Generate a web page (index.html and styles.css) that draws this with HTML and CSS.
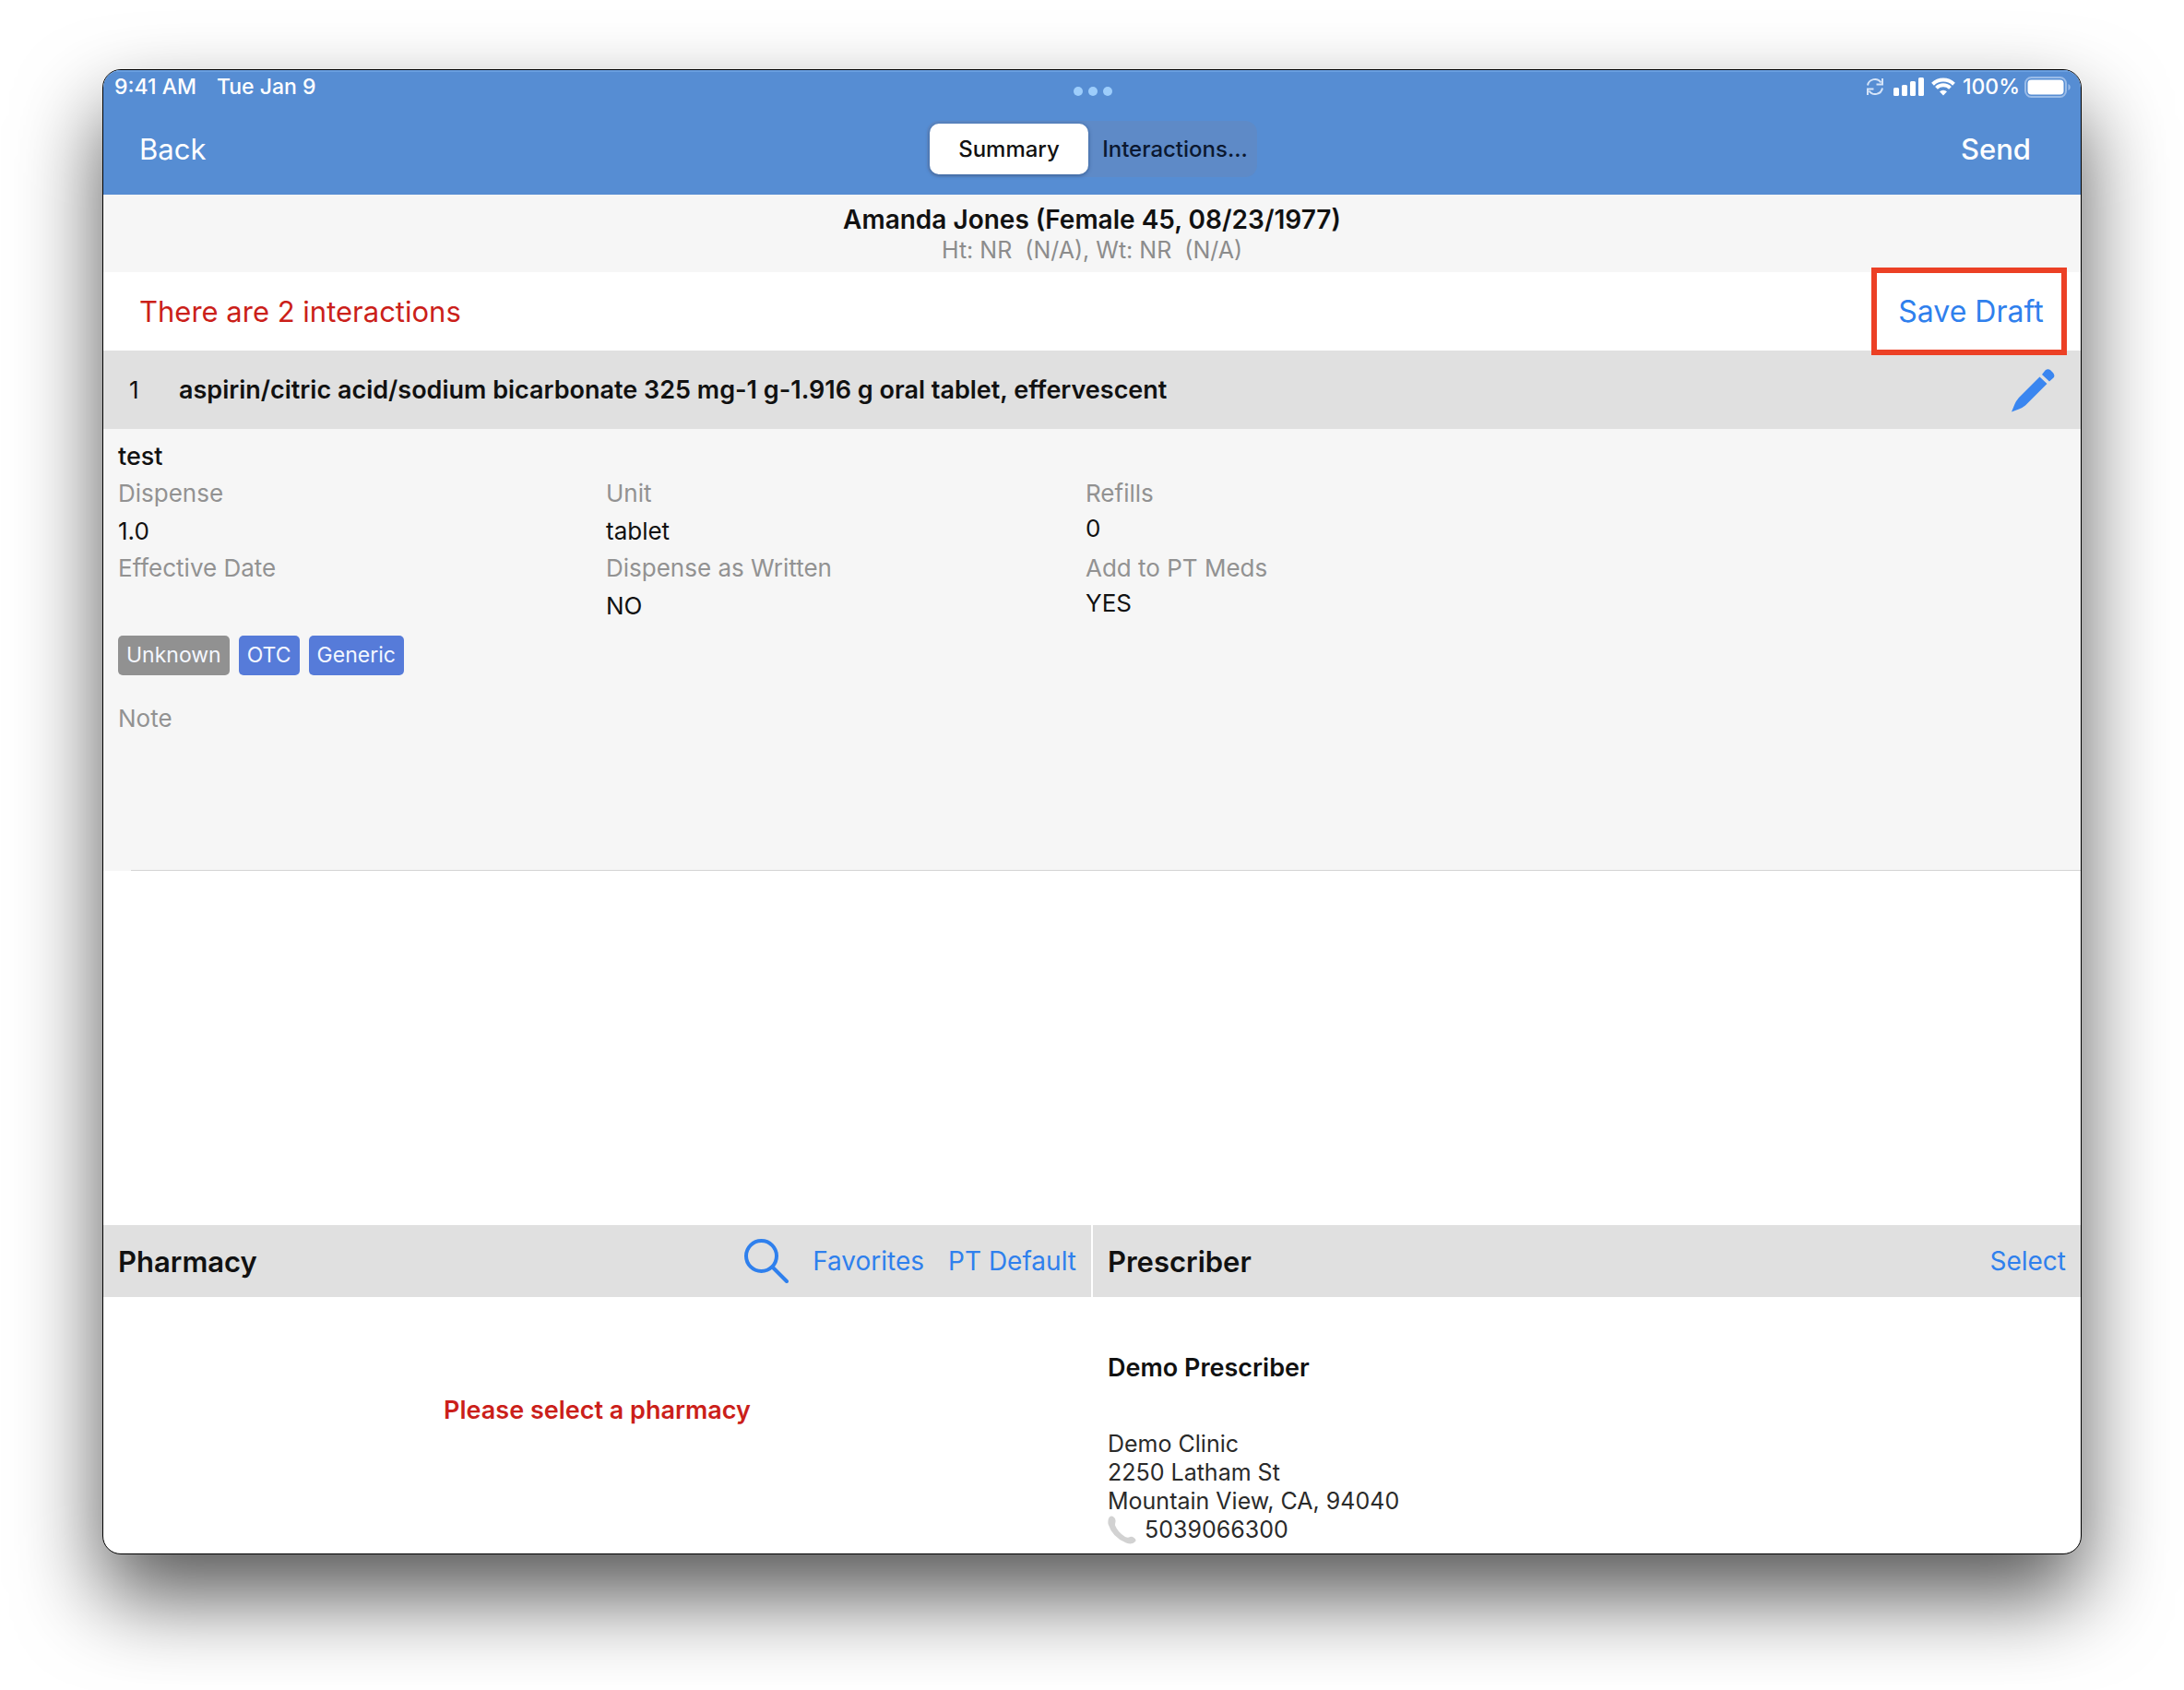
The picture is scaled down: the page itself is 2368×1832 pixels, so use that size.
FILE: index.html
```html
<!DOCTYPE html>
<html lang="en">
<head>
<meta charset="utf-8">
<title>Prescription Summary</title>
<link rel="stylesheet" href="styles.css">
</head>
<body>
<div class="window">
  <header class="topbar">
    <div class="status">
      <div class="status-left"><span>9:41 AM</span><span>Tue Jan 9</span></div>
      <div class="dots" aria-hidden="true"><i></i><i></i><i></i></div>
      <div class="status-right">
        <svg class="ic-sync" viewBox="0 0 20 20" aria-hidden="true"><path d="M2 8.500A8 8 0 0 1 16.500 5.500M18 11.500A8 8 0 0 1 3.500 14.500"/><path d="M18 1v6.500h-6.500M2 19v-6.500h6.500"/></svg>
        <svg class="ic-signal" viewBox="0 0 33 20" aria-hidden="true"><rect x="0" y="11" width="6" height="9" rx="1.500"/><rect x="9" y="8" width="6" height="12" rx="1.500"/><rect x="18" y="4" width="6" height="16" rx="1.500"/><rect x="27" y="0" width="6" height="20" rx="1.500"/></svg>
        <svg class="ic-wifi" viewBox="0 0 26 20" aria-hidden="true"><path d="M1.500 7.200A16.500 16.500 0 0 1 24.500 7.200M5.500 11.400a10.800 10.800 0 0 1 15 0"/><path class="fill" d="M13 19.500l-4-4.200a5.800 5.800 0 0 1 8 0z"/></svg>
        <span>100%</span>
        <svg class="ic-battery" viewBox="0 0 51 23" aria-hidden="true"><rect class="shell" x="1" y="1" width="44" height="21" rx="6.500"/><rect class="charge" x="3.500" y="3.500" width="39" height="16" rx="4"/><path class="tip" d="M47.500 8v7c3-1.500 3-5.500 0-7z"/></svg>
      </div>
    </div>
    <nav class="nav">
      <button class="nav-btn" type="button">Back</button>
      <div class="segmented" role="tablist">
        <button class="segment active" type="button" role="tab" aria-selected="true">Summary</button>
        <button class="segment" type="button" role="tab" aria-selected="false">Interactions...</button>
      </div>
      <button class="nav-btn send" type="button">Send</button>
    </nav>
  </header>

  <section class="patient">
    <h1 class="patient-name">Amanda Jones (Female 45, 08/23/1977)</h1>
    <p class="patient-vitals">Ht: NR&nbsp; (N/A), Wt: NR&nbsp; (N/A)</p>
  </section>

  <section class="alert">
    <p class="alert-text">There are 2 interactions</p>
    <button class="save-draft" type="button">Save Draft</button>
  </section>

  <main class="list">
    <article class="drug">
      <header class="drug-head">
        <span class="drug-index">1</span>
        <h2 class="drug-name">aspirin/citric acid/sodium bicarbonate 325 mg-1 g-1.916 g oral tablet, effervescent</h2>
        <button class="edit" type="button" aria-label="Edit prescription">
          <svg viewBox="0 0 48 48" aria-hidden="true"><path d="M31.500 9.500l8 7.500L16 40.500Q13 43 9 44.500L1 47.500l3.500-8.500Q6 35.500 9 32zM34 7l3.500-4.500q3-2.500 6 0l2.500 2.500q2.500 3 .5 5.500L42 14.500z"/></svg>
        </button>
      </header>
      <div class="drug-body">
        <p class="sig">test</p>
        <div class="fields">
          <dl class="field"><dt>Dispense</dt><dd>1.0</dd><dt>Effective Date</dt><dd></dd></dl>
          <dl class="field"><dt>Unit</dt><dd>tablet</dd><dt>Dispense as Written</dt><dd>NO</dd></dl>
          <dl class="field tight"><dt>Refills</dt><dd>0</dd><dt>Add to PT Meds</dt><dd>YES</dd></dl>
        </div>
        <div class="tags"><span class="tag muted">Unknown</span><span class="tag">OTC</span><span class="tag">Generic</span></div>
        <p class="note">Note</p>
      </div>
    </article>
  </main>

  <footer class="panes">
    <section class="pane">
      <header class="pane-head">
        <h2 class="pane-title">Pharmacy</h2>
        <button class="search" type="button" aria-label="Search pharmacies">
          <svg viewBox="0 0 48 48" aria-hidden="true"><circle cx="18.500" cy="18.500" r="16.500"/><path d="M30.500 30.500L46 46"/></svg>
        </button>
        <button class="link" type="button">Favorites</button>
        <button class="link" type="button">PT Default</button>
      </header>
      <p class="pane-empty">Please select a pharmacy</p>
    </section>
    <section class="pane">
      <header class="pane-head">
        <h2 class="pane-title">Prescriber</h2>
        <button class="link" type="button">Select</button>
      </header>
      <div class="prescriber">
        <h3 class="prescriber-name">Demo Prescriber</h3>
        <address class="address">
          <span>Demo Clinic</span>
          <span>2250 Latham St</span>
          <span>Mountain View, CA, 94040</span>
          <span class="phone"><svg viewBox="0 0 31 31" aria-hidden="true"><path d="M1.500 2Q4-.5 6.500 1.500q2.500 2 2 5Q8 8.500 8 10.500 11 18 19 23q2.500 1 4 .5 3-1.500 5.500.5 3 2 1.500 4-3 4-10 1.500Q5 23.500.5 9 0 4 1.500 2z"/></svg>5039066300</span>
        </address>
      </div>
    </section>
  </footer>
</div>
</body>
</html>
```
FILE: styles.css
```css
* { box-sizing: border-box; margin: 0; padding: 0; }

body {
  display: flex;
  min-height: 100vh;
  padding: 75px 111px 147px;
  background: #fff;
  color: #111;
  font-family: Inter, "Liberation Sans", sans-serif;
  font-size: 26px;
}

button { border: 0; background: none; color: inherit; font: inherit; cursor: pointer; }
h1, h2, h3, address { font-size: inherit; font-style: normal; }
svg { display: block; flex: none; }

.window {
  flex: 1;
  display: flex;
  flex-direction: column;
  overflow: hidden;
  border: 1px solid #000;
  border-radius: 20px;
  background: #fff;
  box-shadow: 0 46px 92px rgba(0, 0, 0, 0.66);
}

/* Status bar and navigation */
.topbar { background: #568dd3; color: #fff; box-shadow: inset 0 2px #6a9fe0; }
.status { display: grid; grid-template-columns: 1fr auto 1fr; align-items: center; height: 36px; padding: 0 10px 0 12px; font-size: 23px; font-weight: 500; }
.status-left { display: flex; gap: 22px; }
.status-right { display: flex; justify-content: flex-end; align-items: center; gap: 8px; }
.dots { display: flex; gap: 6px; padding-top: 10px; }
.dots i { width: 10px; height: 10px; border-radius: 50%; background: #9dcdfb; }
.ic-sync { width: 20px; height: 20px; margin-right: 2px; fill: none; stroke: #d5e4f8; stroke-width: 2; }
.ic-signal { width: 33px; height: 20px; fill: #fff; }
.ic-wifi { width: 26px; height: 20px; fill: none; stroke: #fff; stroke-width: 4; }
.ic-wifi .fill { fill: #fff; stroke: none; }
.ic-battery { width: 51px; height: 23px; margin-left: -3px; }
.ic-battery .shell { fill: none; stroke: #9abce8; stroke-width: 2; }
.ic-battery .charge { fill: #fff; }
.ic-battery .tip { fill: #9abce8; }

.nav { display: grid; grid-template-columns: 1fr auto 1fr; align-items: center; height: 99px; padding: 0 54px 0 39px; }
.nav-btn { justify-self: start; font-size: 31px; }
.send { justify-self: end; font-weight: 500; }
.segmented { display: flex; height: 61px; margin-left: 15px; padding: 3px; border-radius: 13px; background: #5e8ac7; }
.segment { width: 180px; padding-left: 8px; border-radius: 10px; color: #0b1830; font-size: 24px; font-weight: 500; }
.segment.active { width: 172px; padding-left: 0; background: #fff; color: #111; box-shadow: 0 1px 4px rgba(0, 40, 90, 0.5); }

/* Patient banner */
.patient { padding: 11px 16px 8px; background: #f6f6f6; text-align: center; }
.patient-name { font-size: 28px; font-weight: 600; line-height: 33px; }
.patient-vitals { color: #8c8c8c; font-size: 25px; line-height: 32px; }

/* Interaction warning */
.alert { display: flex; align-items: center; justify-content: space-between; height: 85px; padding: 0 15px 0 39px; }
.alert-text { color: #cb1f1a; font-size: 31px; }
.save-draft { position: relative; z-index: 1; flex: none; width: 212px; height: 95px; margin: -5px 0; padding-left: 4px; border: 6px solid #ec4025; color: #2f80ed; font-size: 32px; }

/* Prescription list */
.list { flex: 1; }
.drug-head { display: flex; align-items: center; height: 85px; padding: 0 28px; background: #e0e0e0; }
.drug-index { width: 54px; }
.drug-name { flex: 1; font-size: 27px; font-weight: 600; }
.edit svg { width: 48px; height: 48px; fill: #3a86f0; }
.drug-body { position: relative; min-height: 479px; padding: 10px 16px; background: #f6f6f6; line-height: 40px; }
.drug-body::after { content: ""; position: absolute; right: 0; bottom: 0; left: 30px; height: 1px; background: #d4d4d4; }
.sig { font-size: 27px; font-weight: 500; }
.fields { display: grid; grid-template-columns: 529fr 520fr 1063fr; }
.field dt, .note { color: #929292; }
.field dd { height: 41px; line-height: 41px; }
.field.tight dd { line-height: 35px; }
.tags { display: flex; gap: 10px; margin: 12px 0 27px; }
.tag { padding: 0 9px; border-radius: 5px; background: #567bd9; color: #f4f7ff; font-size: 23px; line-height: 43px; }
.tag.muted { background: #919191; }

/* Pharmacy and prescriber */
.panes { display: grid; grid-template-columns: 1fr 1fr; gap: 2px; }
.pane-head { display: flex; align-items: center; height: 78px; padding: 0 16px; background: #e0e0e0; }
.pane-title { flex: 1; font-size: 31px; font-weight: 600; }
.search svg { width: 48px; height: 48px; fill: none; stroke: #2f80ed; stroke-width: 4; stroke-linecap: round; }
.link { margin-left: 26px; color: #2f80ed; font-size: 28px; }
.pane-empty { padding-top: 107px; color: #cb1f1a; font-size: 27px; font-weight: 600; line-height: 32px; text-align: center; }
.prescriber { padding: 61px 16px 10px; line-height: 31px; }
.prescriber-name { margin-bottom: 52px; font-size: 27px; font-weight: 600; }
.address { display: flex; flex-direction: column; color: #2a2a2a; font-size: 25px; }
.phone { display: flex; align-items: center; gap: 9px; }
.phone svg { width: 31px; height: 31px; fill: #d2d2d2; }
```
